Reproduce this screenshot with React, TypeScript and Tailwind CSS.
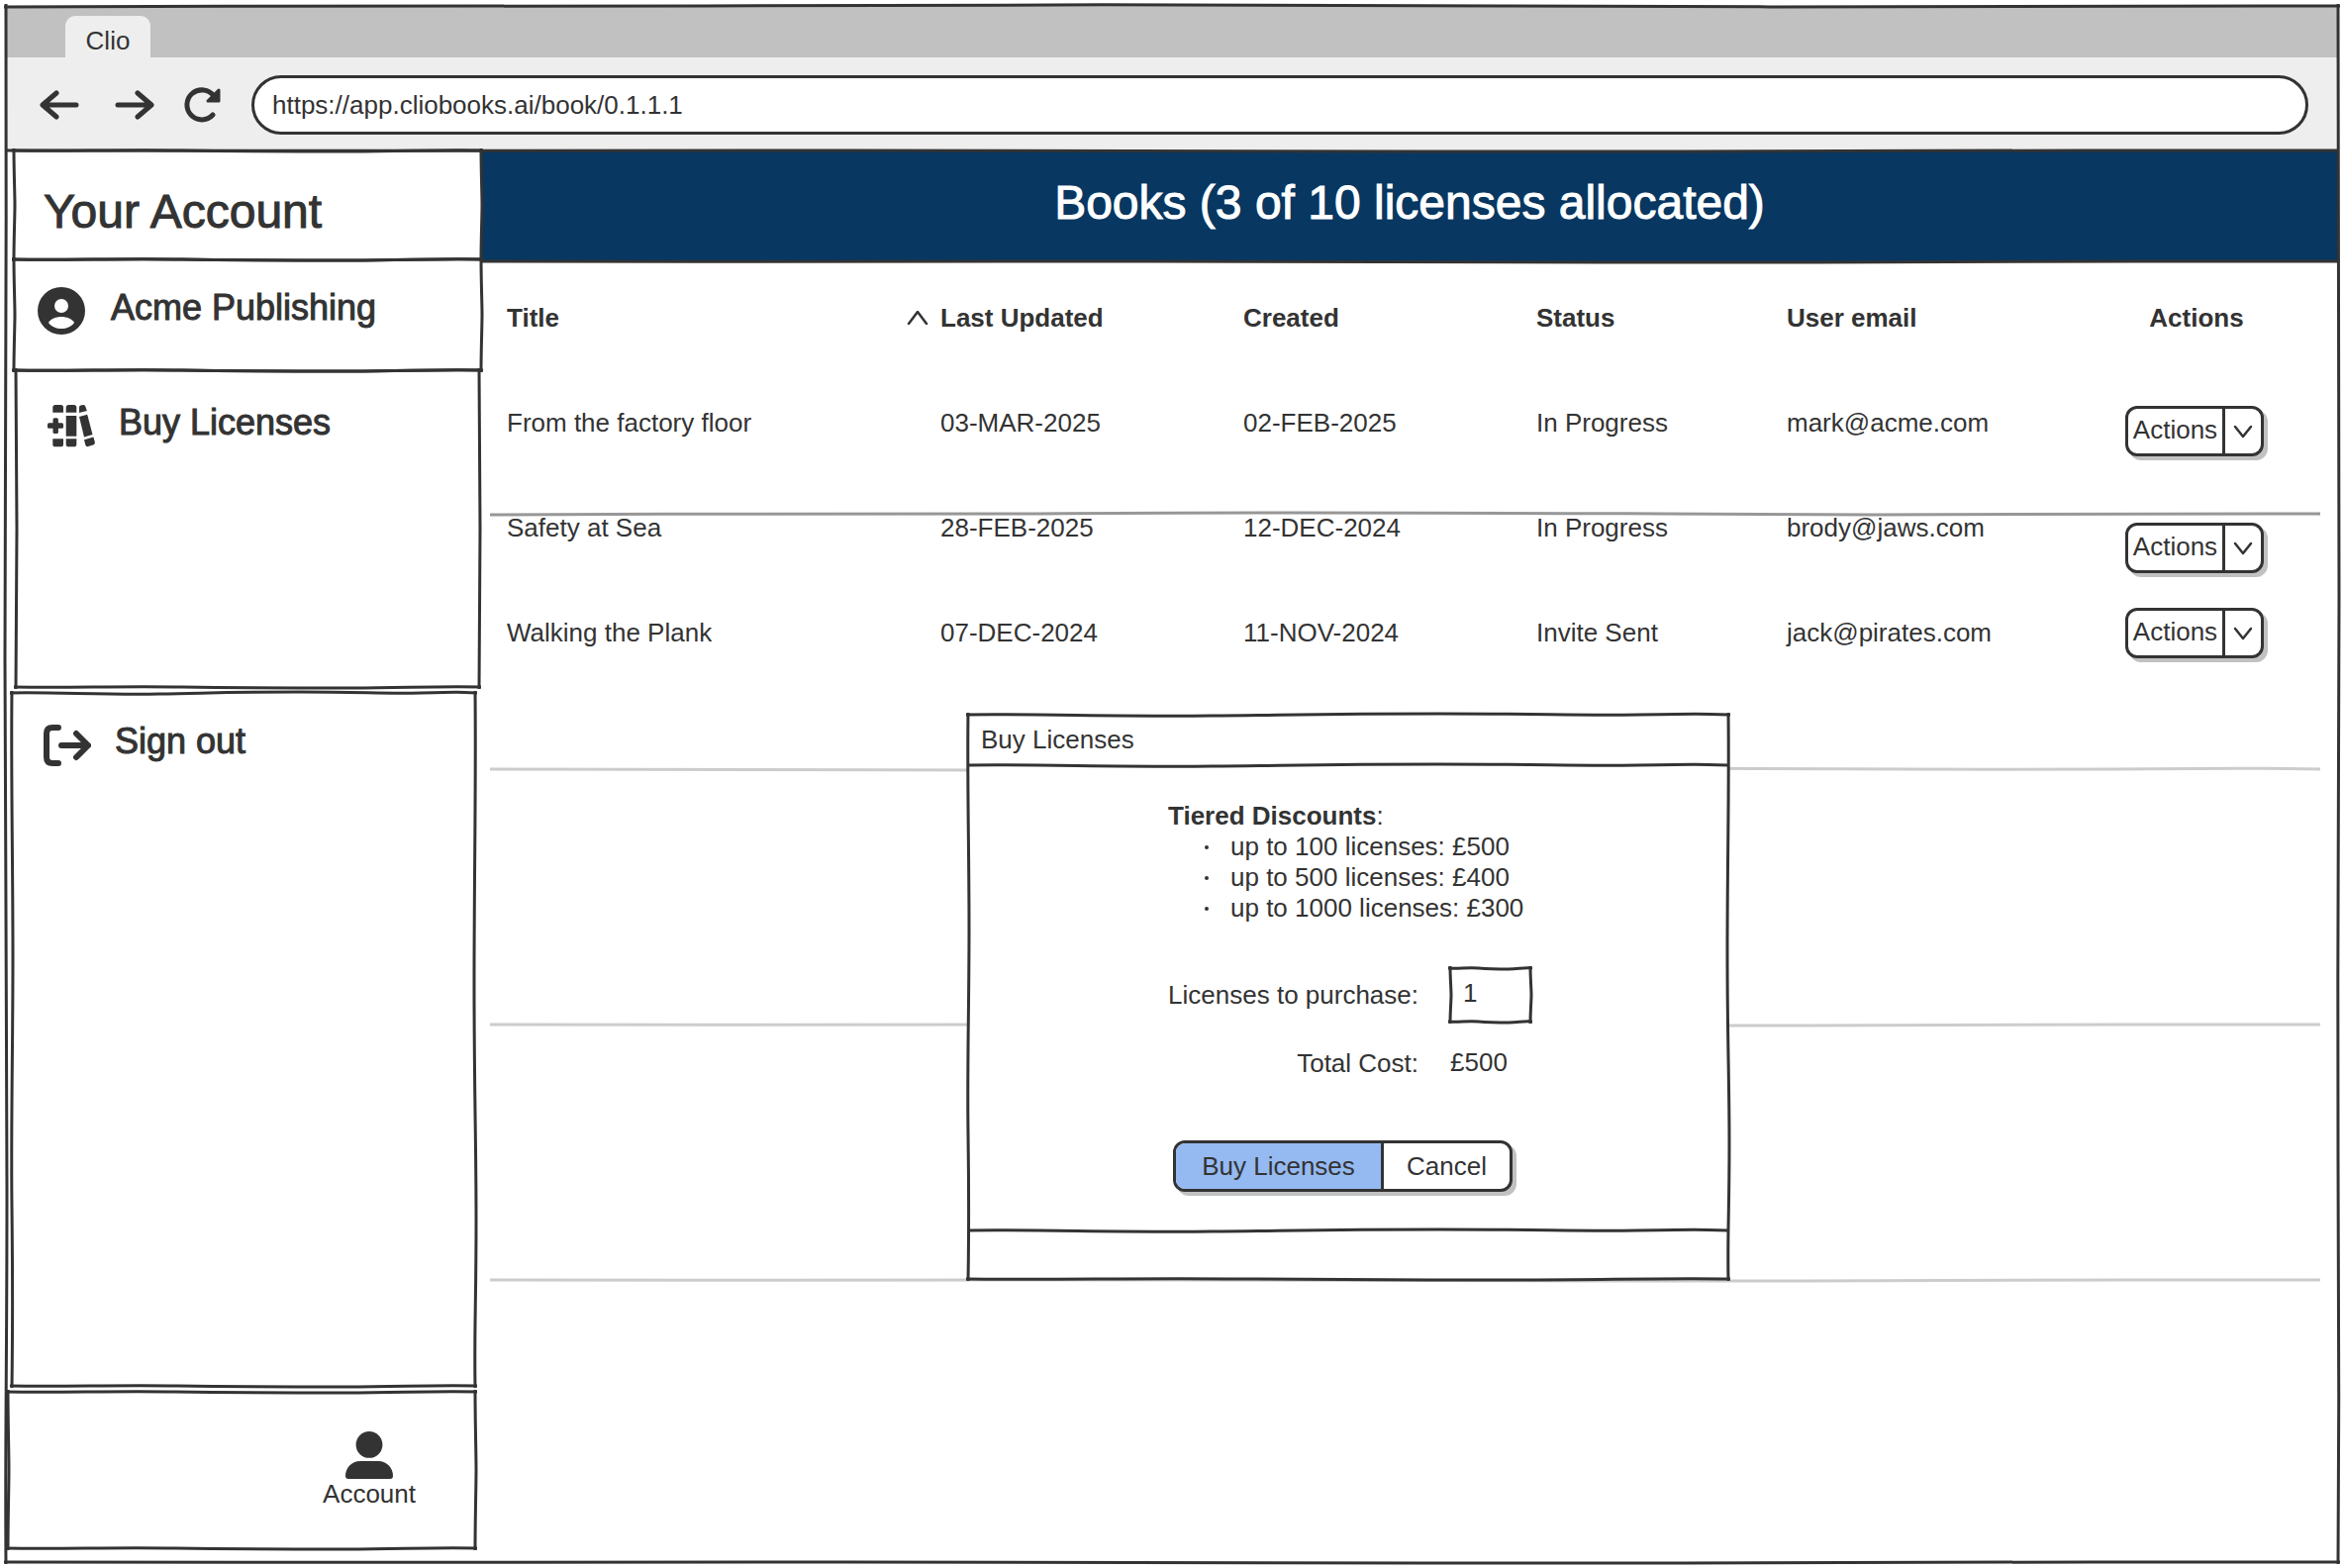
import React from "react";

const INK = "#333333";

const WAVES_H = [
  "M0 5 C100 3 180 6 300 4 S520 3 640 4 S860 6 1000 4",
  "M0 4 C90 3 200 6 320 5 S480 3 620 3 S800 5 880 4 S960 3 1000 4",
  "M0 4 C120 5 220 3 360 4 S600 5 720 5 S900 3 1000 4",
];
const WAVES_V = [
  "M4 0 C3 120 5 240 5 380 S3 620 4 740 S5 900 4 1000",
  "M4 0 C5 140 3 260 3 420 S5 640 5 760 S3 920 4 1000",
  "M4 0 C4 200 5 400 5 500 S4 800 4 1000",
];

function HLine({ wave = 0, color = INK, className = "" }: { wave?: number; color?: string; className?: string }) {
  return (
    <svg aria-hidden="true" viewBox="0 0 1000 8" preserveAspectRatio="none" className={`pointer-events-none block h-[8px] ${className}`}>
      <path d={WAVES_H[wave]} fill="none" stroke={color} strokeWidth="3" strokeLinecap="round" vectorEffect="non-scaling-stroke" />
    </svg>
  );
}

function VLine({ wave = 0, className = "" }: { wave?: number; className?: string }) {
  return (
    <svg aria-hidden="true" viewBox="0 0 8 1000" preserveAspectRatio="none" className={`pointer-events-none block w-[8px] ${className}`}>
      <path d={WAVES_V[wave]} fill="none" stroke={INK} strokeWidth="3" strokeLinecap="round" vectorEffect="non-scaling-stroke" />
    </svg>
  );
}

/* Hand-drawn outline laid over the edges of its positioned parent; `calm` suits short sides. */
function Frame({ flip = false, calm = false }: { flip?: boolean; calm?: boolean }) {
  return (
    <>
      <HLine wave={calm ? 2 : flip ? 1 : 0} className="absolute -left-[2px] -top-[4px] w-[calc(100%+4px)]" />
      <HLine wave={2} className="absolute -bottom-[4px] -left-[2px] w-[calc(100%+4px)]" />
      <VLine wave={calm ? 2 : flip ? 0 : 1} className="absolute -left-[4px] -top-[2px] h-[calc(100%+4px)]" />
      <VLine wave={calm ? 2 : flip ? 1 : 0} className="absolute -right-[4px] -top-[2px] h-[calc(100%+4px)]" />
    </>
  );
}

function BackIcon() {
  return (
    <svg viewBox="0 0 40 30" className="h-[30px] w-[40px]" fill="none" stroke={INK} strokeWidth="5" strokeLinecap="round" strokeLinejoin="round">
      <path d="M3 15H37M17 3L3 15L17 27" />
    </svg>
  );
}

function ForwardIcon() {
  return (
    <svg viewBox="0 0 40 30" className="h-[30px] w-[40px]" fill="none" stroke={INK} strokeWidth="5" strokeLinecap="round" strokeLinejoin="round">
      <path d="M3 15H37M23 3L37 15L23 27" />
    </svg>
  );
}

function ReloadIcon() {
  return (
    <svg viewBox="0 0 38 36" className="h-[36px] w-[38px]" fill="none" stroke={INK} strokeLinecap="round" strokeLinejoin="round">
      <path d="M29 28A15 15 0 1 1 30 9" strokeWidth="5" />
      <path d="M35 3V14H24Z" fill={INK} strokeWidth="3" />
    </svg>
  );
}

function PersonCircleIcon() {
  return (
    <svg viewBox="0 0 48 48" className="size-12 shrink-0">
      <circle cx="24" cy="24" r="24" fill={INK} />
      <circle cx="24" cy="19" r="7" fill="#fff" />
      <path d="M11 36C13 32 19 30 24 30C29 30 35 32 37 36C34 40 29 42 24 42C19 42 14 40 11 36Z" fill="#fff" />
    </svg>
  );
}

function BooksIcon() {
  return (
    <svg viewBox="0 0 48 48" className="size-12 shrink-0" fill={INK}>
      <path d="M5.3 10.7V5.6Q5.3 3 8 3H13.4Q16 3 16 5.6V10.7Z" />
      <path d="M5.3 37.3V42.7Q5.3 45.3 8 45.3H13.4Q16 45.3 16 42.7V37.3Z" />
      <path d="M18.7 10.7V5.6Q18.7 3 21.4 3H26.7Q29.3 3 29.3 5.6V10.7Z" />
      <path d="M18.7 37.3V42.7Q18.7 45.3 21.4 45.3H26.7Q29.3 45.3 29.3 42.7V37.3Z" />
      <rect x="18.7" y="14" width="10.6" height="20.7" />
      <rect x="0" y="21.3" width="16" height="5.4" rx="1.5" />
      <rect x="5.5" y="16.2" width="5.4" height="15.8" rx="1.5" />
      <path d="M32 5.5Q32 4 33.5 3.6L36 3Q37.8 2.8 38.3 4.5L39.8 9L32 11Z" />
      <path d="M32 15L40.2 12.7L45.5 33L37 35.4Z" />
      <path d="M37 38.3L46.4 35.6L47.8 40.4Q48.3 42.8 46 43.5L41 45.1Q39 45.5 38.3 43.4Z" />
    </svg>
  );
}

function SignOutIcon() {
  return (
    <svg viewBox="0 0 48 48" className="size-12 shrink-0" fill="none" stroke={INK} strokeWidth="6" strokeLinecap="round" strokeLinejoin="round">
      <path d="M15 6H9Q3 6 3 12V36Q3 42 9 42H15" />
      <path d="M18 24H45M33 12L45 24L33 36" />
    </svg>
  );
}

function UserIcon() {
  return (
    <svg viewBox="0 0 48 48" className="size-12" fill={INK}>
      <circle cx="24" cy="13.4" r="13.4" />
      <path d="M0 45C0 37 6 30 15 30H33C42 30 48 37 48 45Q48 48 45 48H3Q0 48 0 45Z" />
    </svg>
  );
}

function Chevron({ up = false }: { up?: boolean }) {
  return (
    <svg aria-hidden="true" viewBox="0 0 22 14" className="h-[14px] w-[22px] shrink-0" fill="none" stroke={INK} strokeWidth="2.5" strokeLinecap="round" strokeLinejoin="round">
      <path d={up ? "M2 13L11 1L20 13" : "M3 2L11 12L19 2"} />
    </svg>
  );
}

const books = [
  { title: "From the factory floor", updated: "03-MAR-2025", created: "02-FEB-2025", status: "In Progress", email: "mark@acme.com", cell: "pt-[36px]" },
  { title: "Safety at Sea", updated: "28-FEB-2025", created: "12-DEC-2024", status: "In Progress", email: "brody@jaws.com", cell: "pt-[48px]" },
  { title: "Walking the Plank", updated: "07-DEC-2024", created: "11-NOV-2024", status: "Invite Sent", email: "jack@pirates.com", cell: "pt-[28px]" },
];

const tiers = ["up to 100 licenses: £500", "up to 500 licenses: £400", "up to 1000 licenses: £300"];

function ActionsButton({ book }: { book: string }) {
  return (
    <div className="ml-[54px] flex h-[51px] w-[140px] rounded-[12px] border-[3px] border-[#333333] bg-white shadow-[4px_4px_0_#c1c1c1]">
      <button type="button" className="flex-1 pb-[4px] text-center">Actions</button>
      <button type="button" aria-label={`More actions for ${book}`} className="flex w-[39px] items-center justify-center border-l-[3px] border-[#333333]">
        <Chevron />
      </button>
    </div>
  );
}

function BrowserChrome() {
  return (
    <header>
      <div className="flex h-[52px] items-end bg-[#c1c1c1] pl-[60px]">
        <div className="flex h-[42px] w-[86px] items-center justify-center rounded-t-[10px] bg-[#eeeeee] pt-[8px]">Clio</div>
      </div>
      <div className="flex h-[94px] items-center gap-[30px] bg-[#eeeeee] pl-[34px] pr-[30px] pt-[2px]">
        <nav className="flex gap-9" aria-label="History">
          <button type="button" aria-label="Back"><BackIcon /></button>
          <button type="button" aria-label="Forward"><ForwardIcon /></button>
        </nav>
        <button type="button" aria-label="Reload"><ReloadIcon /></button>
        <input
          aria-label="Address"
          defaultValue="https://app.cliobooks.ai/book/0.1.1.1"
          className="h-[60px] min-w-0 flex-1 rounded-full border-[3px] border-[#333333] bg-white pl-[18px] pr-4 outline-none"
        />
      </div>
    </header>
  );
}

function Sidebar() {
  return (
    <aside className="relative z-10 flex w-[480px] shrink-0 flex-col">
      <section className="relative ml-[8px] h-[110px] bg-white pl-[30px] pt-[34px]">
        <h2 className="text-[48px] leading-[56px] [-webkit-text-stroke:1px_#333333]">Your Account</h2>
        <Frame calm />
      </section>
      <section className="relative ml-[8px] flex h-[112px] items-start gap-[26px] pl-[24px] pt-[28px]">
        <PersonCircleIcon />
        <span className="text-[36px] leading-[42px] [-webkit-text-stroke:1px_#333333]">Acme Publishing</span>
        <Frame calm />
      </section>
      <section className="relative ml-[10px] mr-[2px] h-[320px] pl-[32px] pt-[32px]">
        <button type="button" className="flex items-start gap-[24px]">
          <BooksIcon />
          <span className="text-[36px] leading-[42px] [-webkit-text-stroke:1px_#333333]">Buy Licenses</span>
        </button>
        <Frame calm />
      </section>
      <section className="relative ml-[6px] mr-[6px] mt-[6px] flex-1 pl-[32px] pt-[29px]">
        <button type="button" className="flex items-start gap-[24px]">
          <SignOutIcon />
          <span className="text-[36px] leading-[40px] [-webkit-text-stroke:1px_#333333]">Sign out</span>
        </button>
        <Frame flip />
      </section>
      <section className="relative mb-[14px] ml-[2px] mr-[6px] mt-[6px] flex h-[158px] items-start justify-end pr-[60px] pt-[40px]">
        <button type="button" className="flex flex-col items-center leading-[30px]">
          <UserIcon />
          Account
        </button>
        <Frame calm />
      </section>
    </aside>
  );
}

function BooksTable() {
  return (
    <table className="w-full table-fixed border-collapse text-left">
      <colgroup>
        <col />
        <col className="w-[340px]" />
        <col className="w-[296px]" />
        <col className="w-[253px]" />
        <col className="w-[288px]" />
        <col className="w-[252px]" />
      </colgroup>
      <thead>
        <tr className="h-[106px]">
          <th>Title</th>
          <th aria-sort="ascending">
            <div className="flex items-center gap-[12px]">
              <Chevron up />
              Last Updated
            </div>
          </th>
          <th>Created</th>
          <th>Status</th>
          <th>User email</th>
          <th className="text-center">Actions</th>
        </tr>
      </thead>
      <tbody>
        {books.map((b) => (
          <tr key={b.title} className="h-[106px]">
            <td>{b.title}</td>
            <td className="pl-[34px]">{b.updated}</td>
            <td>{b.created}</td>
            <td>{b.status}</td>
            <td>{b.email}</td>
            <td className={`align-top ${b.cell}`}>
              <ActionsButton book={b.title} />
            </td>
          </tr>
        ))}
      </tbody>
    </table>
  );
}

function BuyDialog() {
  return (
    <div role="dialog" aria-labelledby="buy-title" className="absolute left-[492px] top-[570px] flex w-[768px] flex-col bg-white">
      <Frame flip />
      <h2 id="buy-title" className="h-[47px] pl-[13px] pt-px leading-[48px]">Buy Licenses</h2>
      <HLine wave={1} className="w-full" />
      <div className="mx-auto w-[374px] pr-[3px] pt-[32px]">
        <div className="pl-[5px] leading-[31px]">
          <p><strong>Tiered Discounts</strong>:</p>
          <ul>
            {tiers.map((t) => (
              <li key={t} className="flex items-center pl-[37px]">
                <span className="mr-[22px] size-[4px] rounded-full bg-[#333333]" />
                {t}
              </li>
            ))}
          </ul>
        </div>
        <div className="mt-[45px] grid grid-cols-[1fr_81px] items-center gap-x-[32px] text-right">
          <label htmlFor="qty">Licenses to purchase:</label>
          <div className="relative h-[54px]">
            <input id="qty" defaultValue="1" className="h-full w-full bg-transparent pb-[3px] pl-[13px] outline-none" />
            <Frame calm />
          </div>
          <span className="mt-[22px] leading-[40px]">Total Cost:</span>
          <output htmlFor="qty" className="mt-[20px] text-left leading-[40px]">£500</output>
        </div>
      </div>
      <div className="mb-[35px] ml-[207px] mt-[58px] flex h-[52px] w-[343px] rounded-[12px] border-[3px] border-[#333333] bg-white shadow-[4px_4px_0_#c1c1c1]">
        <button type="button" className="flex-1 rounded-l-[9px] bg-[#95baf2]">Buy Licenses</button>
        <button type="button" className="w-[130px] rounded-r-[9px] border-l-[3px] border-[#333333]">Cancel</button>
      </div>
      <HLine wave={1} className="w-full" />
      <div className="h-[45px]" />
    </div>
  );
}

export default function App() {
  return (
    <div className="flex min-h-screen flex-col bg-white p-[6px] font-['Liberation_Sans',Arial,sans-serif] text-[26px] leading-[32px] text-[#333333]">
      <div className="relative flex flex-1 flex-col">
        <BrowserChrome />
        <div className="relative flex flex-1">
          <Sidebar />
          <main className="relative min-w-0 flex-1">
            <div className="relative flex h-[112px] items-center justify-center bg-[#083761] pb-[6px]">
              <h1 className="text-[48px] leading-[56px] text-white [-webkit-text-stroke:1px_#ffffff]">Books (3 of 10 licenses allocated)</h1>
              <HLine wave={2} className="absolute -bottom-[4px] left-0 w-full" />
            </div>
            <div className="pl-[26px] pr-[17px] pt-[4px]">
              <BooksTable />
            </div>
            <div aria-hidden="true" className="pointer-events-none absolute left-[9px] right-[18px] top-[363px] flex flex-col gap-[250px]">
              <HLine wave={0} color="#979797" className="w-full" />
              <HLine wave={1} color="#cccccc" className="w-full" />
              <HLine wave={2} color="#cccccc" className="w-full" />
              <HLine wave={2} color="#cccccc" className="w-full" />
            </div>
            <BuyDialog />
          </main>
          <HLine wave={2} className="absolute -top-[4px] left-0 z-20 w-full" />
        </div>
        <Frame />
      </div>
    </div>
  );
}
